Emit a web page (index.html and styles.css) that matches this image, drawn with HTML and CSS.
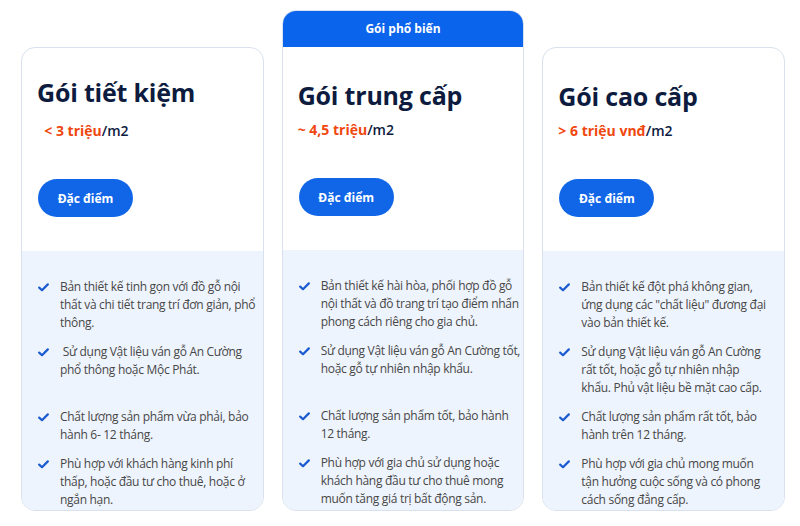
FILE: index.html
```html
<!DOCTYPE html>
<html lang="vi">
<head>
<meta charset="utf-8">
<title>Bảng giá</title>
<link rel="stylesheet" href="styles.css">
</head>
<body>
<main class="plans">
  <section class="card card-basic">
    <div class="card-top">
      <h2 class="title title-first">Gói tiết kiệm</h2>
      <p class="price">&nbsp; <span class="amount">&lt; 3 triệu</span>/m2</p>
      <a class="btn" href="#">Đặc điểm</a>
    </div>
    <ul class="features">
      <li>Bản thiết kế tinh gọn với đồ gỗ nội thất và chi tiết trang trí đơn giản, phổ thông.</li>
      <li>&nbsp;Sử dụng Vật liệu ván gỗ An Cường phổ thông hoặc Mộc Phát.</li>
      <li>Chất lượng sản phẩm vừa phải, bảo hành 6- 12 tháng.</li>
      <li>Phù hợp với khách hàng kinh phí thấp, hoặc đầu tư cho thuê, hoặc ở ngắn hạn.</li>
    </ul>
  </section>

  <section class="card card-featured">
    <div class="badge">Gói phổ biến</div>
    <div class="card-top">
      <h2 class="title">Gói trung cấp</h2>
      <p class="price"><span class="amount">~ 4,5 triệu</span>/m2</p>
      <a class="btn" href="#">Đặc điểm</a>
    </div>
    <ul class="features">
      <li>Bản thiết kế hài hòa, phối hợp đồ gỗ nội thất và đồ trang trí tạo điểm nhấn phong cách riêng cho gia chủ.</li>
      <li>Sử dụng Vật liệu ván gỗ An Cường tốt, hoặc gỗ tự nhiên nhập khẩu.</li>
      <li>Chất lượng sản phẩm tốt, bảo hành 12 tháng.</li>
      <li>Phù hợp với gia chủ sử dụng hoặc khách hàng đầu tư cho thuê mong muốn tăng giá trị bất động sản.</li>
    </ul>
  </section>

  <section class="card card-premium">
    <div class="card-top">
      <h2 class="title">Gói cao cấp</h2>
      <p class="price"><span class="amount">&gt; 6 triệu vnđ</span>/m2</p>
      <a class="btn" href="#">Đặc điểm</a>
    </div>
    <ul class="features">
      <li>Bản thiết kế đột phá không gian, ứng dụng các "chất liệu" đương đại vào bản thiết kế.</li>
      <li>Sử dụng Vật liệu ván gỗ An Cường rất tốt, hoặc gỗ tự nhiên nhập khẩu. Phủ vật liệu bề mặt cao cấp.</li>
      <li>Chất lượng sản phẩm rất tốt, bảo hành trên 12 tháng.</li>
      <li>Phù hợp với gia chủ mong muốn tận hưởng cuộc sống và có phong cách sống đẳng cấp.</li>
    </ul>
  </section>
</main>
</body>
</html>
```

FILE: styles.css
```css
* { box-sizing: border-box; }

html, body {
  margin: 0;
  padding: 0;
  background: #ffffff;
}

body {
  font-family: "Open Sans", "Noto Sans", sans-serif;
  color: #444;
}

.plans {
  display: flex;
  align-items: flex-end;
  gap: 18px;
  padding: 10px 15px 0 21px;
}

.card {
  width: 243px;
  height: 464px;
  display: flex;
  flex-direction: column;
  border: 1px solid #d9e1ee;
  border-radius: 14px;
  overflow: hidden;
  background: #fff;
}

.card-featured {
  height: 501px;
}

.badge {
  height: 37px;
  flex: none;
  background: #0b64ec;
  color: #fff;
  font-weight: 700;
  font-size: 12px;
  display: flex;
  align-items: center;
  justify-content: center;
  margin: -1px -1px 0;
}

.card-top {
  flex: none;
  height: 203px;
  padding: 32px 15px 0;
}

.title {
  margin: 0;
  font-size: 25px;
  line-height: 33px;
  font-weight: 700;
  color: #0d1b3e;
  letter-spacing: -0.2px;
}

.title-first {
  margin-top: -4px;
  padding-bottom: 4px;
}

.price {
  margin: 8px 0 0;
  font-size: 14px;
  line-height: 20px;
  font-weight: 600;
  color: #0d1b3e;
}

.amount {
  color: #f0470f;
  font-weight: 700;
}

.btn {
  display: inline-flex;
  align-items: center;
  justify-content: center;
  margin-top: 38px;
  margin-left: 1px;
  width: 95px;
  height: 38px;
  border-radius: 19px;
  background: #1166e8;
  color: #fff;
  font-size: 12px;
  font-weight: 700;
  text-decoration: none;
}

.features {
  flex: 1;
  list-style: none;
  margin: 0;
  padding: 27px 3px 0 38px;
  background: #eef4fd;
  font-size: 12px;
  letter-spacing: -0.3px;
  line-height: 18px;
  color: #474747;
}

.card-featured .features {
  padding-right: 0;
}

.card-premium .features {
  padding-right: 14px;
}

.features li {
  position: relative;
  margin-bottom: 11px;
}

.features li:nth-child(2) {
  min-height: 54px;
}

.features li::before {
  content: "";
  position: absolute;
  left: -22px;
  top: 5px;
  width: 11px;
  height: 9px;
  background: url("data:image/svg+xml,%3Csvg xmlns='http://www.w3.org/2000/svg' viewBox='0 0 11 9'%3E%3Cpath d='M1.2 4.6 L4 7.2 L9.8 1.4' fill='none' stroke='%231a5bd0' stroke-width='2.2' stroke-linecap='round' stroke-linejoin='round'/%3E%3C/svg%3E") no-repeat center / contain;
}
```
